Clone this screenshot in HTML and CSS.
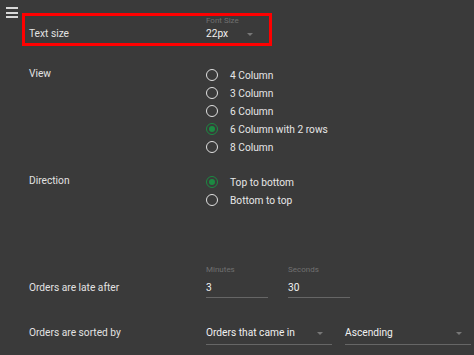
FILE: index.html
```html
<!DOCTYPE html>
<html lang="en">
<head>
  <meta charset="UTF-8" />
  <title>Settings</title>
  <link rel="stylesheet" href="styles.css">
</head>
<body>
  <button class="menu-btn" aria-label="Menu">
    <span></span><span></span><span></span>
  </button>

  <div class="settings">
    <div class="row highlight">
      <div class="row-label">Text size</div>
      <div class="field select size-select">
        <div class="field-label">Font Size</div>
        <div class="field-value">22px <span class="arrow"></span></div>
      </div>
    </div>

    <div class="row view-row">
      <div class="row-label">View</div>
      <div class="radio-group">
        <label class="radio"><span class="dot"></span>4 Column</label>
        <label class="radio"><span class="dot"></span>3 Column</label>
        <label class="radio"><span class="dot"></span>6 Column</label>
        <label class="radio checked"><span class="dot"></span>6 Column with 2 rows</label>
        <label class="radio"><span class="dot"></span>8 Column</label>
      </div>
    </div>

    <div class="row direction-row">
      <div class="row-label">Direction</div>
      <div class="radio-group">
        <label class="radio checked"><span class="dot"></span>Top to bottom</label>
        <label class="radio"><span class="dot"></span>Bottom to top</label>
      </div>
    </div>

    <div class="row late-row">
      <div class="row-label">Orders are late after</div>
      <div class="fields">
        <div class="field short">
          <div class="field-label">Minutes</div>
          <div class="field-value">3</div>
        </div>
        <div class="field short">
          <div class="field-label">Seconds</div>
          <div class="field-value">30</div>
        </div>
      </div>
    </div>

    <div class="row sort-row">
      <div class="row-label">Orders are sorted by</div>
      <div class="fields wide-gap">
        <div class="field select wide">
          <div class="field-value">Orders that came in <span class="arrow"></span></div>
        </div>
        <div class="field select wide">
          <div class="field-value">Ascending <span class="arrow"></span></div>
        </div>
      </div>
    </div>
  </div>
</body>
</html>
```

FILE: styles.css
```css
body {
  font-family: Roboto, 'Liberation Sans', sans-serif;
  font-size: 10.2px;
  background: #3a3a3a;
  color: #e2e2e2;
  margin: 0;
  padding: 0;
  width: 474px;
  height: 355px;
  overflow: hidden;
  position: relative;
}

.menu-btn {
  position: absolute;
  left: 6px;
  top: 7px;
  width: 12px;
  height: 11px;
  padding: 0;
  border: none;
  background: none;
  display: flex;
  flex-direction: column;
  justify-content: space-between;
  cursor: pointer;
}

.menu-btn span {
  display: block;
  height: 2px;
  background: #d8d8d8;
}

.settings {
  padding: 13px 0 0 22px;
}

.row {
  display: grid;
  grid-template-columns: 177px 1fr;
  padding-left: 7px;
}

.row-label {
  line-height: 14px;
}

/* highlighted row */
.highlight {
  width: 240px;
  height: 27px;
  border: 3px solid #f00;
  padding-left: 4px;
  box-sizing: content-box;
  align-items: end;
}

.highlight .row-label {
  padding-bottom: 2px;
}

.size-select {
  width: 56px;
  padding-bottom: 2px;
}

.size-select .field-label {
  margin-bottom: 1px;
}

.size-select .field-value {
  line-height: 14px;
}

/* fields */
.field-label {
  font-size: 8px;
  line-height: 10px;
  color: #707070;
}

.field-value {
  color: #f0f0f0;
  line-height: 14px;
  position: relative;
  white-space: nowrap;
}

.arrow {
  position: absolute;
  right: 9px;
  top: 6px;
  width: 0;
  height: 0;
  border-left: 3px solid transparent;
  border-right: 3px solid transparent;
  border-top: 3px solid #777;
}

.fields {
  display: flex;
  gap: 20px;
}

.fields.wide-gap {
  gap: 13px;
}

.field.short {
  width: 62px;
  border-bottom: 1px solid #666;
  padding-bottom: 2px;
}

.field.short .field-value {
  margin-top: 6px;
}

.field.wide {
  width: 126px;
  border-bottom: 1px solid #666;
  padding-bottom: 4px;
}

/* radios */
.view-row {
  margin-top: 20px;
}

.view-row .row-label,
.direction-row .row-label {
  line-height: 16px;
}

.direction-row {
  margin-top: 17px;
}

.radio-group {
  display: flex;
  flex-direction: column;
}

.radio {
  display: flex;
  align-items: center;
  height: 18px;
  color: #e6e6e6;
}

.dot {
  width: 10px;
  height: 10px;
  border: 1.5px solid #e0e0e0;
  border-radius: 50%;
  margin-right: 12px;
  flex-shrink: 0;
  position: relative;
}

.radio.checked .dot {
  border-color: #1c8a42;
}

.radio.checked .dot::after {
  content: '';
  position: absolute;
  left: 2px;
  top: 2px;
  width: 6px;
  height: 6px;
  border-radius: 50%;
  background: #1c8a42;
}

.late-row {
  margin-top: 56px;
  align-items: end;
}

.late-row .row-label {
  padding-bottom: 3px;
}

.sort-row {
  margin-top: 28px;
  align-items: start;
}
```
